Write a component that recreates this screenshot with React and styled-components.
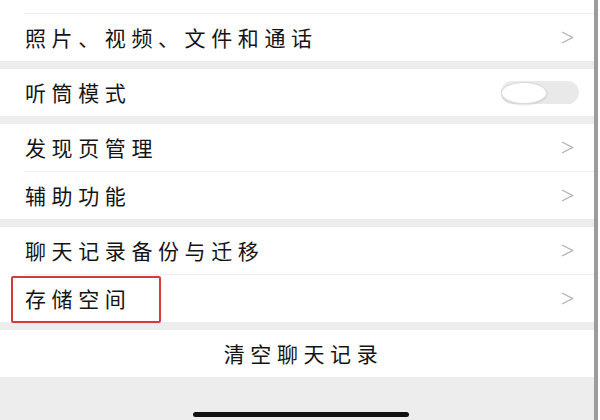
import React from 'react';
import styled, { createGlobalStyle } from 'styled-components';

const GlobalStyle = createGlobalStyle`
  html, body {
    margin: 0;
    padding: 0;
    background: #ffffff;
  }
  body {
    font-family: "Noto Sans CJK SC", "Noto Sans", sans-serif;
  }
`;

const Screen = styled.div`
  width: 600px;
  height: 420px;
  display: flex;
  overflow: hidden;
  background: #ffffff;
`;

const Content = styled.div`
  flex: 1;
  display: flex;
  flex-direction: column;
  background: #ededed;
`;

const ScrollEdge = styled.div`
  width: 4px;
  margin-right: 2px;
  background: #9c9c9c;
`;

const Group = styled.div`
  background: #ffffff;
  margin-bottom: ${(p) => (p.$last ? 0 : 8)}px;
`;

const TopCut = styled.div`
  height: 13px;
  background: #ffffff;
`;

const Row = styled.div`
  position: relative;
  height: 47px;
  display: flex;
  align-items: center;
  justify-content: ${(p) => (p.$center ? 'center' : 'space-between')};
  padding: 0 20px 0 25px;
  border-top: ${(p) => (p.$divider ? '1px solid #efefef' : 'none')};
  margin-left: ${(p) => (p.$divider ? 24 : 0)}px;
  padding-left: ${(p) => (p.$divider ? 1 : 25)}px;
`;

const Label = styled.span`
  font-size: 21px;
  letter-spacing: 5.6px;
  color: #141414;
  line-height: 1;
  margin-left: ${(p) => (p.$center ? 8 : 0)}px;
`;

const Track = styled.div`
  width: 78px;
  height: 23px;
  border-radius: 12px;
  background: #e9e9e9;
  display: flex;
  align-items: center;
  margin-right: -5px;
`;

const Knob = styled.div`
  width: 44px;
  height: 20px;
  border-radius: 50%;
  background: #ffffff;
  border: 1px solid #dcdcdc;
  box-shadow: 0 1px 2px rgba(0, 0, 0, 0.12);
`;

const Highlight = styled.div`
  position: absolute;
  left: -13px;
  top: 1px;
  width: 146px;
  height: 43px;
  border: 2px solid #d63a3a;
  border-radius: 2px;
`;

const Bottom = styled.div`
  flex: 1;
  display: flex;
  align-items: flex-end;
  justify-content: center;
  padding: 0 0 3px 8px;
`;

const HomeBar = styled.div`
  width: 216px;
  height: 5px;
  border-radius: 3px;
  background: #111111;
`;

const Chevron = () => (
  <svg width="13" height="13" viewBox="0 0 13 13">
    <polyline
      points="1,1 11.5,6.5 1,12"
      fill="none"
      stroke="#b3b3b3"
      strokeWidth="1.4"
    />
  </svg>
);

const Item = ({ label, divider, toggle, highlight }) => (
  <Row $divider={divider}>
    {highlight && <Highlight />}
    <Label>{label}</Label>
    {toggle ? (
      <Track>
        <Knob />
      </Track>
    ) : (
      <Chevron />
    )}
  </Row>
);

const App = () => {
  return (
    <>
      <GlobalStyle />
      <Screen>
        <Content>
          <Group>
            <TopCut />
            <Item label="照片、视频、文件和通话" divider />
          </Group>
          <Group>
            <Item label="听筒模式" toggle />
          </Group>
          <Group>
            <Item label="发现页管理" />
            <Item label="辅助功能" divider />
          </Group>
          <Group>
            <Item label="聊天记录备份与迁移" />
            <Item label="存储空间" divider highlight />
          </Group>
          <Group $last>
            <Row $center>
              <Label $center>清空聊天记录</Label>
            </Row>
          </Group>
          <Bottom>
            <HomeBar />
          </Bottom>
        </Content>
        <ScrollEdge />
      </Screen>
    </>
  );
};

export default App;
